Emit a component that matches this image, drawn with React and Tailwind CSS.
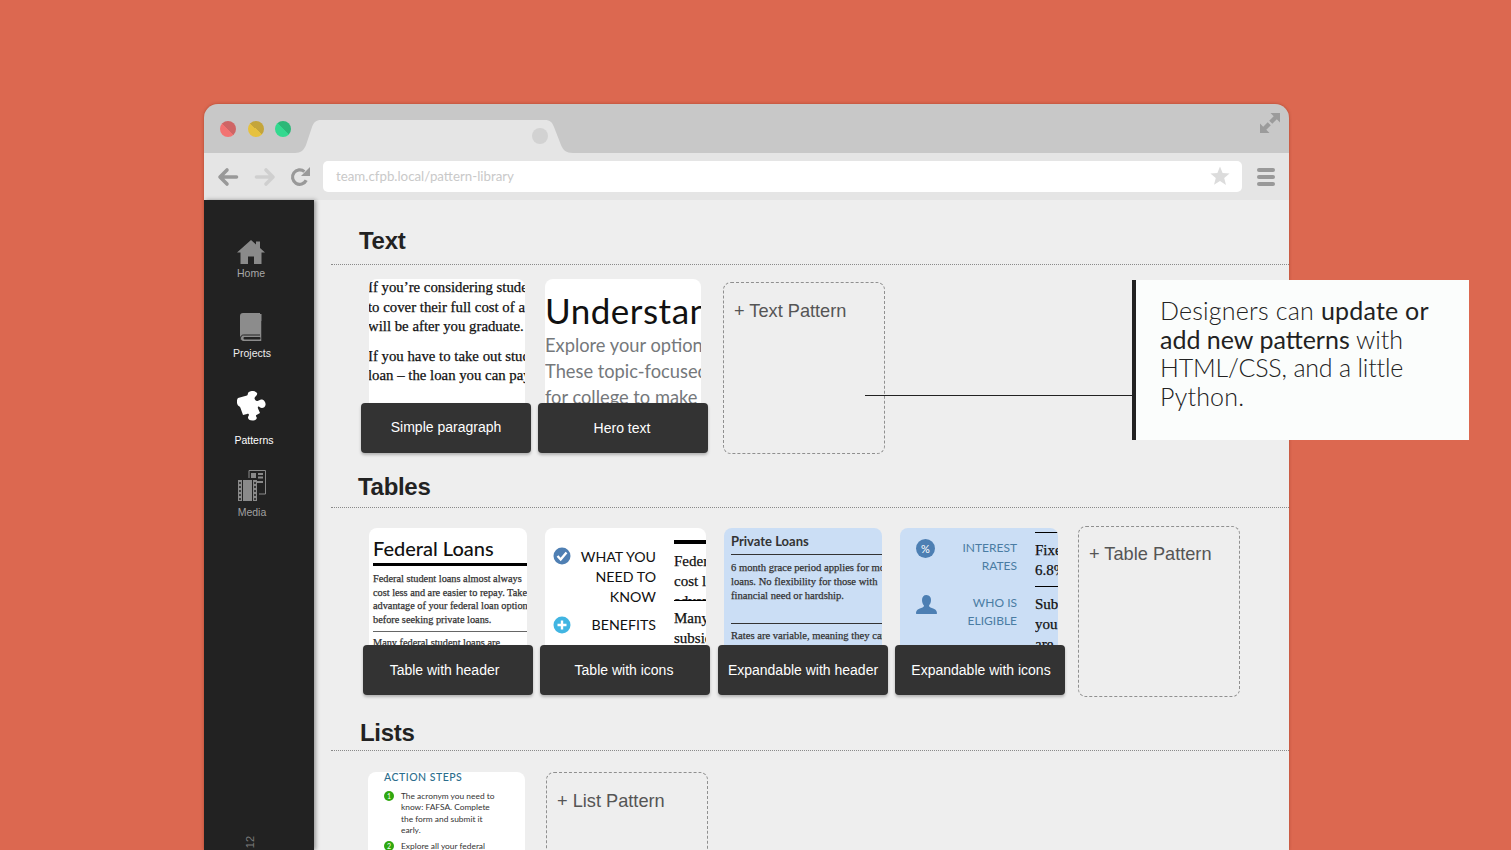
import React from "react";

const sans = "font-['Liberation_Sans',Arial,sans-serif]";
const lato = "font-['Lato',sans-serif]";
const serif = "font-['Liberation_Serif',serif] [-webkit-text-stroke:0.25px]";

function Tile({ label, previewClass, labelClass = "", children }) {
  return (
    <div className="w-[170px] shrink-0 flex flex-col">
      <div className={"rounded-t-[8px] overflow-hidden " + previewClass}>{children}</div>
      <div className={"h-[50px] rounded-[4px] bg-[#333333] text-white text-[14px] flex items-center justify-center shadow-[0_2px_3px_rgba(0,0,0,0.25)] whitespace-nowrap " + sans + " " + labelClass}>
        {label}
      </div>
    </div>
  );
}

function Dashed({ label, className }) {
  return (
    <div className={"w-[162px] shrink-0 rounded-[8px] border border-dashed border-[#8f8f8f] text-[#555] text-[18.200px] leading-[24px] pl-[10px] whitespace-nowrap " + sans + " " + className}>
      + {label}
    </div>
  );
}

function Heading({ children, className }) {
  return (
    <div className={"border-b border-dotted border-[#8a8a8a] flex items-end text-[24px] tracking-[-0.3px] leading-[30px] font-bold text-[#222] " + sans + " " + className}>
      {children}
    </div>
  );
}

function Line({ children, className = "" }) {
  return <div className={"whitespace-nowrap " + className}>{children}</div>;
}

function Light({ className }) {
  return <div className={"w-[16px] h-[16px] rounded-full " + className} />;
}

function NavItem({ icon, label, className, labelClass }) {
  return (
    <div className={"flex flex-col items-center text-[10.500px] leading-[12px] " + sans + " " + className}>
      {icon}
      <div className={labelClass}>{label}</div>
    </div>
  );
}

export default function App() {
  return (
    <div className="relative w-[1511px] h-[850px] overflow-hidden bg-[#dc6850] pt-[104px] pl-[204px]">
      <div className="w-[1085px] h-[746px] rounded-t-[14px] overflow-hidden flex flex-col shadow-[0_0_3px_rgba(120,40,20,0.5)]">
        {/* title bar */}
        <div className="h-[49px] shrink-0 bg-[#c8c8c8] flex items-end pl-[16px] pr-[9px]">
          <div className="flex gap-[11.500px] self-start mt-[17px]">
            <Light className="bg-[linear-gradient(45deg,#f27372_50%,#cf6565_50%)]" />
            <Light className="bg-[linear-gradient(45deg,#e6c13e_50%,#c4a53a_50%)]" />
            <Light className="bg-[linear-gradient(45deg,#33d98f_50%,#2bb878_50%)]" />
          </div>
          <div className="relative w-[278px] h-[33px] ml-[4px]">
            <svg width="278" height="33" viewBox="0 0 278 33" className="block">
              <path d="M0 33 C6 33 9 30 11 25 L17 7 C19 2 21 0 26 0 L250 0 C255 0 257 2 259 7 L266 25 C268 30 271 33 278 33 Z" fill="#e5e5e5" />
            </svg>
            <div className="absolute left-[237px] top-[8px] w-[16px] h-[16px] rounded-full bg-[#d2d2d2]" />
          </div>
          <svg width="20" height="20" viewBox="0 0 20 20" className="ml-auto self-start mt-[9px]">
            <path d="M10.500 0H20V9.500L16.800 6.300 12.300 10.800 9.200 7.700 13.700 3.200zM9.500 20H0V10.500L3.200 13.700 7.700 9.200 10.800 12.300 6.300 16.800z" fill="#9b9b9b" />
          </svg>
        </div>
        {/* toolbar */}
        <div className="h-[47px] shrink-0 bg-[#e5e5e5] flex items-center pl-[13px] pr-[14px]">
          <svg width="22" height="20" viewBox="0 0 22 20">
            <path d="M10 3 3 10l7 7M3.500 10H19.500" fill="none" stroke="#999" strokeWidth="3.600" strokeLinecap="round" strokeLinejoin="round" />
          </svg>
          <svg width="22" height="20" viewBox="0 0 22 20" className="ml-[15px]">
            <path d="M12 3l7 7-7 7M18.500 10H2.500" fill="none" stroke="#cfcfcf" strokeWidth="3.600" strokeLinecap="round" strokeLinejoin="round" />
          </svg>
          <svg width="22" height="22" viewBox="0 0 22 22" className="ml-[13px]">
            <path d="M17.200 14.200A7.200 7.200 0 1 1 15.400 5.600" fill="none" stroke="#999" strokeWidth="3.200" />
            <path d="M21 1v9h-9z" fill="#999" />
          </svg>
          <div className={"ml-[12px] w-[919px] h-[31px] mb-[1px] rounded-[5px] bg-white flex items-center pl-[13px] pr-[12px] text-[13.300px] text-[#c9c9c9] " + lato}>
            <span className="mt-[1px]">team.cfpb.local/pattern-library</span>
            <svg width="20" height="20" viewBox="0 0 20 20" className="ml-auto">
              <path d="M10 0.500l2.600 6.600 7 .4-5.400 4.500 1.800 6.900L10 14.900l-6 3.900 1.800-6.900L.4 7.500l7-.4z" fill="#dcdcdc" />
            </svg>
          </div>
          <div className="ml-auto flex flex-col gap-[3px]">
            <div className="w-[18px] h-[4px] rounded-full bg-[#999]" />
            <div className="w-[18px] h-[4px] rounded-full bg-[#999]" />
            <div className="w-[18px] h-[4px] rounded-full bg-[#999]" />
          </div>
        </div>
        {/* body */}
        <div className="flex-1 flex min-h-0">
          <aside className="relative z-10 w-[110px] shrink-0 bg-[#222222] shadow-[2px_0_4px_rgba(0,0,0,0.35)] pt-[40px] flex flex-col">
            <NavItem
              className="ml-[-16px] text-[#a8a8a8]"
              labelClass="mt-[3px]"
              icon={
                <svg width="28" height="24" viewBox="0 0 28 24">
                  <path d="M14 0 L19 4.500V1.500h4v6.600L28 12.500h-3.500V24h-7.500v-7.500h-6V24H3.500V12.500H0z" fill="#8a8a8a" />
                </svg>
              }
              label="Home"
            />
            <NavItem
              className="ml-[-14px] mt-[34px] text-[#ededed]"
              labelClass="mt-[5px]"
              icon={
                <svg width="23" height="29" viewBox="0 0 23 29" className="mr-[2px]">
                  <path d="M3 0H20V1H21.500V28H3C1 28 0 26.500 0 25V3C0 1 1 0 3 0Z" fill="#8c8c8c" />
                  <path d="M22 8V28.500H3.500C1.500 28.500.5 27 .5 25.300S1.500 22 3.500 22H20" fill="none" stroke="#222" strokeWidth="1" />
                  <rect x="3.500" y="24" width="17" height="2.500" rx="1" fill="#222" />
                </svg>
              }
              label="Projects"
            />
            <NavItem
              className="ml-[-10px] mt-[32px] text-white"
              labelClass="mt-[13px]"
              icon={
                <svg width="29" height="30" viewBox="0 0 29 30" className="mr-[6px]">
                  <path d="M1 7 L10 4.500 C11 4 10.500 2.500 11.500 1.200 C13.500 -.6 18.500 -.5 20 2 C21 4 18 5.500 17.500 7 C17.500 8.500 19 10.500 20.500 10 L24 8.500 C26.500 8 29 11 28.500 14 C28 17 24.500 18 22.500 16 C21 15 20.500 16 21 17.500 L23 22 L19.500 24 C18.500 24.500 19 25.500 19.500 26 C20.500 28 18.500 29.500 15.500 29.500 C12 29.500 10 27 11.500 25 C12.500 23.500 11.500 22.500 10 23 L6 24 L3.500 17 C3 15.500 2 15 1 14.500 C-.5 12 -.5 9 1 7 Z" fill="#fff" />
                </svg>
              }
              label="Patterns"
            />
            <NavItem
              className="ml-[-14px] mt-[24px] text-[#a0a0a0]"
              labelClass="mt-[4px]"
              icon={
                <svg width="28" height="32" viewBox="0 0 28 32">
                  <path d="M11 .5H27.500V24H21" fill="none" stroke="#8a8a8a" strokeWidth="1" />
                  <path d="M11 .5V8" fill="none" stroke="#8a8a8a" strokeWidth="1" />
                  <rect x="13" y="3" width="5" height="5" fill="#8a8a8a" />
                  <rect x="20" y="3" width="5" height="2" fill="#8a8a8a" />
                  <rect x="20" y="6.500" width="5" height="2" fill="#8a8a8a" />
                  <rect x="13" y="11" width="12" height="2" fill="#8a8a8a" />
                  <path d="M0 10H19V31H0z" fill="#8a8a8a" />
                  <path d="M4.500 10V31M14.500 10V31" stroke="#222" strokeWidth="1" />
                  <path d="M1 13h2M1 17h2M1 21h2M1 25h2M1 29h2M16 13h2M16 17h2M16 21h2M16 25h2M16 29h2" stroke="#222" strokeWidth="1.500" />
                </svg>
              }
              label="Media"
            />
            <div className={"mt-auto ml-[40px] h-[16px] w-[12px] flex items-center justify-center text-[11px] text-[#7a7a7a] -rotate-90 " + sans}>12</div>
          </aside>
          <main className="flex-1 min-w-0 bg-[#eeeeee] pl-[17px] overflow-hidden">
            <Heading className="h-[65px] pl-[28px] pb-[8px]">Text</Heading>
            <div className="h-[189px] flex pl-[30px] pt-[14px] gap-[7px]">
              <Tile label="Simple paragraph" labelClass="pb-[1px]" previewClass="h-[124px] ml-[8px] w-[156px] bg-white">
                <div className={"text-[14.800px] leading-[19.500px] text-[#111] -ml-[1px] mt-[-1px] " + serif}>
                  <Line>If you’re considering student</Line>
                  <Line>to cover their full cost of attendance</Line>
                  <Line>will be after you graduate.</Line>
                  <Line className="mt-[10px]">If you have to take out student</Line>
                  <Line>loan – the loan you can pay</Line>
                </div>
              </Tile>
              <Tile label="Hero text" labelClass="pr-[2px]" previewClass="h-[124px] ml-[7px] w-[156px] bg-white">
                <div className={"text-[35px] leading-[44px] tracking-[0.5px] text-[#111] pt-[9px] whitespace-nowrap " + lato}>Understanding</div>
                <div className={"text-[18.300px] leading-[26px] text-[#75787b] " + lato}>
                  <Line>Explore your options</Line>
                  <Line>These topic-focused</Line>
                  <Line>for college to make</Line>
                </div>
              </Tile>
              <Dashed label="Text Pattern" className="ml-[8px] mt-[3px] h-[172px] pt-[16px]" />
            </div>

            <Heading className="h-[54px] pl-[27px] pb-[5px]">Tables</Heading>
            <div className="h-[189px] flex pl-[32px] pt-[20px] gap-[7px]">
              <Tile label="Table with header" labelClass="pr-[7px] pt-[1px]" previewClass="h-[117px] ml-[6px] w-[158px] bg-white">
                <div className="pl-[4px]">
                  <div className={"text-[20px] leading-[26px] font-medium text-[#111] pt-[7px] " + lato}>Federal Loans</div>
                  <div className="h-[3px] bg-black mt-[2px]" />
                  <div className={"text-[10.300px] leading-[13.600px] text-[#333] mt-[6px] " + serif}>
                    <Line>Federal student loans almost always</Line>
                    <Line>cost less and are easier to repay. Take</Line>
                    <Line>advantage of your federal loan options</Line>
                    <Line>before seeking private loans.</Line>
                  </div>
                  <div className="h-px bg-[#666] mt-[5px]" />
                  <div className={"text-[10.300px] leading-[13.600px] text-[#333] mt-[4px] whitespace-nowrap " + serif}>Many federal student loans are</div>
                </div>
              </Tile>
              <Tile label="Table with icons" labelClass="pt-[1px] pr-[2px]" previewClass="h-[117px] ml-[5px] w-[161px] bg-white flex">
                <div className={"w-[111px] shrink-0 text-[14.200px] leading-[20px] text-[#111] pl-[8px] pt-[19px] " + lato}>
                  <div className="flex justify-between">
                    <svg width="18" height="18" viewBox="0 0 18 18" className="shrink-0">
                      <circle cx="9" cy="9" r="8.500" fill="#4f7fb3" />
                      <path d="M4.500 9l3.200 3.500L13.500 5.500" fill="none" stroke="#fff" strokeWidth="2.400" />
                    </svg>
                    <div className="text-right">WHAT YOU<br />NEED TO<br />KNOW</div>
                  </div>
                  <div className="flex justify-between mt-[8px]">
                    <svg width="18" height="18" viewBox="0 0 18 18" className="shrink-0 mt-[1px]">
                      <circle cx="9" cy="9" r="8.500" fill="#41b5e2" />
                      <path d="M4.500 9h9M9 4.500v9" fill="none" stroke="#fff" strokeWidth="2.400" />
                    </svg>
                    <div>BENEFITS</div>
                  </div>
                </div>
                <div className={"ml-[18px] flex-1 min-w-0 overflow-hidden pt-[12px] text-[15px] leading-[20px] text-[#111] " + serif}>
                  <div className="h-[4px] bg-black" />
                  <div className="h-[52px] overflow-hidden mt-[4px] pt-[3px]">
                    <Line>Federal</Line>
                    <Line>cost less</Line>
                    <Line>advantage</Line>
                  </div>
                  <div className="h-px bg-black" />
                  <div className="mt-[7px]">
                    <Line>Many</Line>
                    <Line>subsidized</Line>
                  </div>
                </div>
              </Tile>
              <div className="ml-[1px]">
                <Tile label="Expandable with header" labelClass="pt-[1px]" previewClass="h-[117px] ml-[6px] w-[158px] bg-[#cbdef5] pl-[7px]">
                  <div className={"text-[13px] leading-[18px] font-bold text-[#333] pt-[4px] " + lato}>Private Loans</div>
                  <div className="h-px bg-[#333] mt-[4px]" />
                  <div className={"text-[10.600px] leading-[14px] text-[#333] mt-[6px] " + serif}>
                    <Line>6 month grace period applies for most</Line>
                    <Line>loans. No flexibility for those with</Line>
                    <Line>financial need or hardship.</Line>
                  </div>
                  <div className="h-px bg-[#333] mt-[20px]" />
                  <div className={"text-[10.600px] leading-[14px] text-[#333] mt-[5px] whitespace-nowrap " + serif}>Rates are variable, meaning they can</div>
                </Tile>
              </div>
              <Tile label="Expandable with icons" labelClass="pt-[1px] pl-[2px]" previewClass="h-[117px] ml-[5px] w-[158px] bg-[#cbdef5] flex">
                <div className={"w-[117px] shrink-0 pl-[16px] pt-[11px] text-[12px] leading-[18px] text-[#4a7ca3] " + lato}>
                  <div className="flex justify-between">
                    <svg width="19" height="19" viewBox="0 0 19 19" className="shrink-0">
                      <circle cx="9.500" cy="9.500" r="9.500" fill="#4d7fb3" />
                      <text x="9.500" y="13.500" textAnchor="middle" fontSize="11" fill="#fff" fontFamily="Lato">%</text>
                    </svg>
                    <div className="text-right">INTEREST<br />RATES</div>
                  </div>
                  <div className="flex justify-between mt-[19px]">
                    <svg width="21" height="19" viewBox="0 0 21 19" className="shrink-0 mt-[1px]">
                      <path d="M10.500 0c3 0 4.500 2.200 4.500 5s-1.200 4.500-2 5.500c0 1.500 1.500 2 3.500 2.800S21 15 21 18.500c0 .3-.3.500-.5.500H.5c-.2 0-.5-.2-.5-.5 0-3.500 2.500-4.400 4.500-5.200S8 12 8 10.500C7.200 9.500 6 8 6 5s1.500-5 4.500-5z" fill="#4d7fb3" />
                    </svg>
                    <div className="text-right">WHO IS<br />ELIGIBLE</div>
                  </div>
                </div>
                <div className={"ml-[18px] flex-1 min-w-0 overflow-hidden pt-[4px] text-[15px] leading-[20px] text-[#111] " + serif}>
                  <div className="h-px bg-black" />
                  <div className="mt-[7px]">
                    <Line>Fixed</Line>
                    <Line>6.8%</Line>
                  </div>
                  <div className="h-px bg-black mt-[6px]" />
                  <div className="mt-[7px]">
                    <Line>Subsidized</Line>
                    <Line>you</Line>
                    <Line>are</Line>
                  </div>
                </div>
              </Tile>
              <Dashed label="Table Pattern" className="ml-[6px] mt-[-2px] h-[171px] pt-[15px]" />
            </div>

            <Heading className="h-[54px] pl-[29px] pb-[2px]">Lists</Heading>
            <div className="flex pl-[37px] pt-[21px]">
              <div className={"w-[157px] h-[90px] rounded-t-[8px] overflow-hidden bg-white pl-[16px] text-[8.400px] leading-[11.300px] text-[#333] " + lato}>
                <div className="text-[10.500px] leading-[12px] tracking-[0.5px] font-medium text-[#2b6d8c] -mt-[1px]">ACTION STEPS</div>
                <div className="flex gap-[7px] mt-[8px]">
                  <div className="w-[10px] h-[10px] rounded-full bg-[#2fa80f] text-white text-[7px] leading-[10px] text-center shrink-0">1</div>
                  <div className="whitespace-nowrap">The acronym you need to<br />know: FAFSA. Complete<br />the form and submit it<br />early.</div>
                </div>
                <div className="flex gap-[7px] mt-[5px]">
                  <div className="w-[10px] h-[10px] rounded-full bg-[#2fa80f] text-white text-[7px] leading-[10px] text-center shrink-0">2</div>
                  <div className="whitespace-nowrap">Explore all your federal</div>
                </div>
              </div>
              <Dashed label="List Pattern" className="ml-[21px] h-[172px] pt-[16px]" />
            </div>
          </main>
        </div>
      </div>

      {/* callout over the page */}
      <div className="absolute left-[865px] top-[395px] w-[268px] h-px bg-[#222]" />
      <div className={"absolute left-[1132px] top-[280px] w-[337px] h-[160px] border-l-4 border-[#222] bg-[#fbfdfc] pl-[24px] pt-[16px] text-[25px] leading-[28.700px] font-light text-[#222] " + lato}>
        <span className="tracking-[0.2px]">Designers can <span className="font-normal">update or</span></span>
        <br />
        <span className="tracking-[0px]"><span className="font-normal">add new patterns</span> with</span>
        <br />
        <span className="tracking-[-0.200px]">HTML/CSS, and a little</span>
        <br />
        <span className="tracking-[0.2px]">Python.</span>
      </div>
    </div>
  );
}
